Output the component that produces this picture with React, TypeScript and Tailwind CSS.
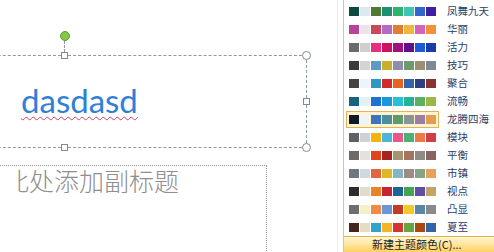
const themes = [
  { name: "凤舞九天", colors: ["#0b4a3c", "#dde8f0", "#4f7a30", "#1f8f73", "#2db36a", "#40c4b4", "#3366cc", "#3d1fa0"] },
  { name: "华丽", colors: ["#b8449a", "#ece4e8", "#c8485e", "#b56bc4", "#e27b34", "#f1b73c", "#d265b8", "#f19138"] },
  { name: "活力", colors: ["#6b6b6b", "#cfcfcf", "#e6307f", "#d01060", "#a0107e", "#60108a", "#1f5bd6", "#1a3ca8"] },
  { name: "技巧", colors: ["#3b3b3b", "#d4d4d4", "#5d9bc4", "#cbae2a", "#8e8eaa", "#6f9a6b", "#9c8f73", "#7b8a96"] },
  { name: "聚合", colors: ["#454545", "#eef4fa", "#2f98c4", "#d42a2a", "#e4651f", "#3565a8", "#2f3d82", "#8a3232"] },
  { name: "流畅", colors: ["#17657a", "#e3f1f3", "#1f72d1", "#1996dd", "#28c0d6", "#24b394", "#5bb062", "#9ab846"] },
  { name: "龙腾四海", colors: ["#0e1a26", "#f0f4f8", "#3d74ba", "#4b8f9b", "#5f9a6c", "#8c9493", "#9b7fa0", "#e49b52"], active: true },
  { name: "模块", colors: ["#5e6068", "#d0d0d4", "#f2b40c", "#4eb4d8", "#e8568a", "#4cb072", "#ec7a44", "#cf3f48"] },
  { name: "平衡", colors: ["#6e6a68", "#e4e2dc", "#e0441e", "#a52420", "#a49474", "#a27461", "#908a86", "#8a6363"] },
  { name: "市镇", colors: ["#6c7884", "#d2d8e0", "#e2663e", "#e1b52a", "#84b4c0", "#9c8c84", "#84a484", "#e4a25c"] },
  { name: "视点", colors: ["#2c2c2c", "#e2dccc", "#e88424", "#c42434", "#1f6494", "#45a353", "#5f4ea2", "#c4a466"] },
  { name: "凸显", colors: ["#6d6d6d", "#f2f2c6", "#f08a44", "#6c96d4", "#c43a2a", "#f2c82a", "#5a88a4", "#8a8a8a"] },
  { name: "夏至", colors: ["#45261c", "#e6dcc4", "#33a2c6", "#f4b424", "#d23434", "#66a442", "#a84812", "#3264a8"] },
];

const App = () => {
  return (
    <div className="flex h-[252px] w-[494px] overflow-hidden bg-white">
      {/* Slide editing area */}
      <div className="w-[338px] shrink-0 border-r border-[#ededed]">
        {/* Title placeholder (selected) */}
        <div className="relative ml-[-178px] mt-[55px] h-[93px] w-[485px] border border-dashed border-[#8d99a6]">
          {/* rotation handle */}
          <span className="absolute left-[calc(50%-5px)] top-[-25px] h-[10px] w-[10px] rounded-full border border-[#5f9a2c] bg-[#86c64a]" />
          <span className="absolute left-[calc(50%-1px)] top-[-15px] h-[11px] border-l border-dashed border-[#8d99a6]" />
          <span className="absolute left-[calc(50%-4px)] top-[-4px] h-[7px] w-[7px] border border-[#7f8a99] bg-white" />
          <span className="absolute bottom-[-4px] left-[calc(50%-4px)] h-[7px] w-[7px] border border-[#7f8a99] bg-white" />
          <span className="absolute right-[-4px] top-[calc(50%-4px)] h-[7px] w-[7px] border border-[#7f8a99] bg-white" />
          <span className="absolute right-[-5px] top-[-5px] h-[9px] w-[9px] rounded-full border border-[#7f8a99] bg-white" />
          <span className="absolute bottom-[-5px] right-[-5px] h-[9px] w-[9px] rounded-full border border-[#7f8a99] bg-white" />

          <div className="pl-[198px] pt-[28px]">
            <span className="font-['Lato',sans-serif] text-[33px] leading-[33px] text-[#2f7fd6] underline decoration-[#c8407a] decoration-wavy decoration-1 underline-offset-[3px]">
              dasdasd
            </span>
          </div>
        </div>

        {/* Subtitle placeholder */}
        <div className="ml-[-200px] mt-[17px] h-[120px] w-[467px] border border-dotted border-[#9a9a9a]">
          <div className="ml-[217px] overflow-hidden pt-[2px]">
            <div className="ml-[-64px] whitespace-nowrap font-['Noto_Sans_CJK_SC',sans-serif] text-[25px] font-light leading-[25px] text-[#8f8f8f]">
              单击此处添加副标题
            </div>
          </div>
        </div>
      </div>

      <div className="w-[5px] shrink-0" />

      {/* Theme colours menu */}
      <div className="flex w-[151px] shrink-0 flex-col border-l border-[#c5c5c5] font-['Noto_Sans_CJK_SC',sans-serif]">
        <div className="flex flex-col pt-[2px]">
          {themes.map((t) => (
            <div key={t.name} className="flex h-[18px] items-center">
              <div
                className={
                  t.active
                    ? "ml-[2px] flex gap-[1px] border border-[#e2b35a] bg-[#fff3d2] p-[2px] py-[3px]"
                    : "ml-[2px] flex gap-[1px] border border-transparent p-[2px]"
                }
              >
                {t.colors.map((c, i) => (
                  <span key={i} className="h-[9px] w-[10px]" style={{ backgroundColor: c }} />
                ))}
              </div>
              <span className="ml-[8px] text-[10.5px] leading-none text-[#2c3e66]">{t.name}</span>
            </div>
          ))}
        </div>
        <div className="mt-auto flex h-[16px] items-center border-t border-[#e3b04a] bg-linear-to-b from-[#fff6d2] to-[#ffd25e] pl-[28px] text-[11px] leading-none text-[#222]">
          新建主题颜色(C)...
        </div>
      </div>
    </div>
  );
};

export default App;
